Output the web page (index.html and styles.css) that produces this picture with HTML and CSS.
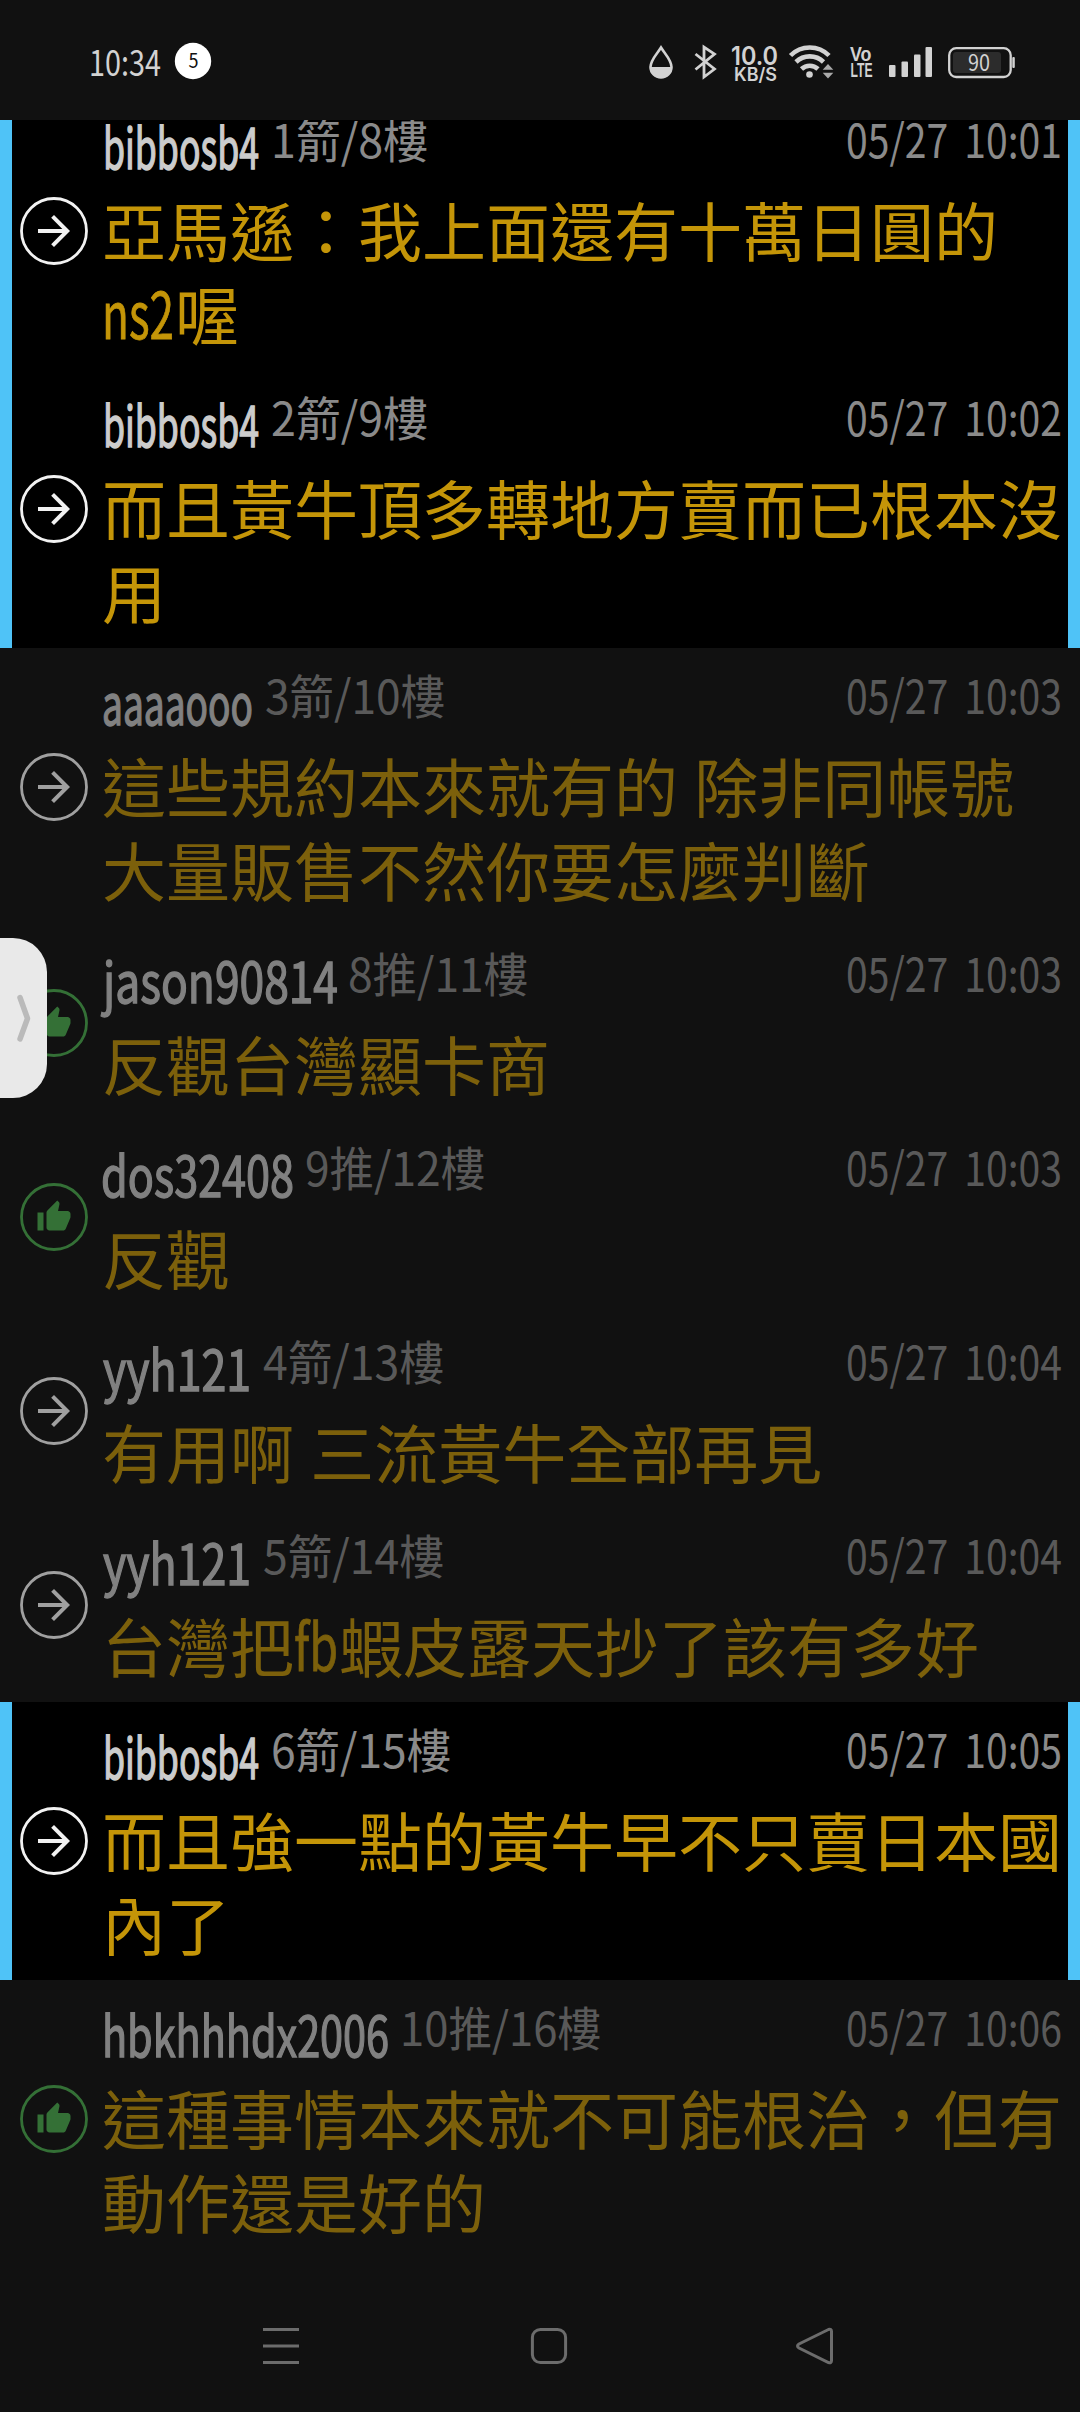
FILE: index.html
```html
<!DOCTYPE html>
<html lang="zh-Hant">
<head>
<meta charset="utf-8">
<title>推文</title>
<link rel="stylesheet" href="styles.css">
</head>
<body>
<svg class="defs" width="0" height="0">
  <symbol id="arrow" viewBox="0 0 68 68">
    <circle cx="34" cy="34" r="32.5" fill="none" stroke="currentColor" stroke-width="2.8"/>
    <path transform="translate(10 10) scale(2)" fill="currentColor" d="M12 4l-1.41 1.41L16.17 11H4v2h12.17l-5.58 5.59L12 20l8-8z"/>
  </symbol>
  <symbol id="thumb" viewBox="0 0 68 68">
    <circle cx="34" cy="34" r="32.5" fill="none" stroke="currentColor" stroke-width="2.8"/>
    <path transform="translate(16 16) scale(1.5)" fill="currentColor" d="M1 21h4V9H1v12zm22-11c0-1.1-.9-2-2-2h-6.31l.95-4.57.03-.32c0-.41-.17-.79-.44-1.06L14.17 1 7.59 7.59C7.22 7.95 7 8.45 7 9v10c0 1.1.9 2 2 2h9c.83 0 1.54-.5 1.84-1.22l3.02-7.05c.09-.23.14-.47.14-.73v-2z"/>
  </symbol>
</svg>
<div class="screen">
  <header class="status">
    <svg class="clock" width="126" height="60" viewBox="90 30 126 60">
      <text x="89" y="76" font-size="35" textLength="72" lengthAdjust="spacingAndGlyphs" fill="#d2d2d2">10:34</text>
      <circle cx="193" cy="61" r="18.2" fill="#fff"/>
      <text x="188.5" y="67.5" font-size="20" textLength="10" lengthAdjust="spacingAndGlyphs" fill="#111">5</text>
    </svg>
    <svg class="indicators" width="370" height="60" viewBox="646 30 370 60" fill="#d2d2d2">
      <path d="M661 47.5C657 54 650.5 60 650.5 67a10.5 10.5 0 0 0 21 0C671.500 60 665 54 661 47.5z" fill="none" stroke="#d2d2d2" stroke-width="2.6"/>
      <path d="M650 67h22a11 11 0 0 1-22 0z"/>
      <path d="M695.500 54l19 15-10.500 8V47l10.500 7-19 15.500" fill="none" stroke="#d2d2d2" stroke-width="2.8"/>
      <text class="bold" x="731" y="64.500" font-size="25.500" textLength="47" lengthAdjust="spacingAndGlyphs">10.0</text>
      <text class="bold" x="734" y="80.500" font-size="18.500" textLength="43" lengthAdjust="spacingAndGlyphs">KB/S</text>
      <g fill="none" stroke="#d2d2d2" stroke-width="4.600">
        <path d="M790.500 55.500a27 27 0 0 1 38.500 0"/>
        <path d="M796 62a19.500 19.500 0 0 1 27.500 0"/>
        <path d="M801.500 69a12 12 0 0 1 16.500 0"/>
      </g>
      <circle cx="809.500" cy="74.500" r="3.300"/>
      <path d="M828 64l5.300 5.800h-10.600zM828 78.500l5.300-5.800h-10.600z" fill="#aaa"/>
      <text class="bold narrow" x="850" y="61" font-size="19.500" textLength="21.500" lengthAdjust="spacingAndGlyphs">Vo</text>
      <text class="bold narrow" x="850.500" y="77" font-size="19.500" textLength="22" lengthAdjust="spacingAndGlyphs">LTE</text>
      <rect x="889" y="65" width="6.500" height="12" rx="1"/>
      <rect x="901.500" y="61.500" width="6.500" height="15.500" rx="1"/>
      <rect x="914" y="54.500" width="6.500" height="22.500" rx="1"/>
      <rect x="925.500" y="47" width="6.500" height="30" rx="1"/>
      <rect x="949.200" y="48.200" width="61.500" height="28.800" rx="7" fill="none" stroke="#d2d2d2" stroke-width="2.300"/>
      <rect x="953" y="52" width="48" height="21" rx="3" fill="#2c2c2c"/>
      <rect x="1012.300" y="57" width="2.500" height="11" rx="1"/>
      <text x="968" y="71" font-size="22.500" textLength="22" lengthAdjust="spacingAndGlyphs">90</text>
    </svg>
  </header>

  <main class="list">
    <article class="row own first">
      <svg class="icon"><use href="#arrow"/></svg>
      <div class="content">
        <div class="head">
          <svg class="name" width="158" height="60"><text x="1" y="44" textLength="156" lengthAdjust="spacingAndGlyphs">bibbosb4</text></svg>
          <svg class="floor" width="156" height="60"><text y="33" textLength="157" lengthAdjust="spacingAndGlyphs">1箭/8樓</text></svg>
          <svg class="time" width="216" height="60"><text y="33" textLength="216" lengthAdjust="spacingAndGlyphs">05/27 10:01</text></svg>
        </div>
        <p>亞馬遜：我上面還有十萬日圓的<br><svg class="latin" width="73" height="60"><text y="54" textLength="72" lengthAdjust="spacingAndGlyphs">ns2</text></svg>喔</p>
      </div>
    </article>
    <article class="row own">
      <svg class="icon"><use href="#arrow"/></svg>
      <div class="content">
        <div class="head">
          <svg class="name" width="158" height="60"><text x="1" y="44" textLength="156" lengthAdjust="spacingAndGlyphs">bibbosb4</text></svg>
          <svg class="floor" width="156" height="60"><text y="33" textLength="157" lengthAdjust="spacingAndGlyphs">2箭/9樓</text></svg>
          <svg class="time" width="216" height="60"><text y="33" textLength="216" lengthAdjust="spacingAndGlyphs">05/27 10:02</text></svg>
        </div>
        <p>而且黃牛頂多轉地方賣而已根本沒用</p>
      </div>
    </article>
    <article class="row">
      <svg class="icon"><use href="#arrow"/></svg>
      <div class="content">
        <div class="head">
          <svg class="name" width="152" height="60"><text x="0" y="44" textLength="151" lengthAdjust="spacingAndGlyphs">aaaaooo</text></svg>
          <svg class="floor" width="179" height="60"><text y="33" textLength="180" lengthAdjust="spacingAndGlyphs">3箭/10樓</text></svg>
          <svg class="time" width="216" height="60"><text y="33" textLength="216" lengthAdjust="spacingAndGlyphs">05/27 10:03</text></svg>
        </div>
        <p>這些規約本來就有的 除非同帳號<br>大量販售不然你要怎麼判斷</p>
      </div>
    </article>
    <article class="row">
      <svg class="icon up"><use href="#thumb"/></svg>
      <div class="content">
        <div class="head">
          <svg class="name" width="235" height="60"><text x="1" y="44" textLength="235" lengthAdjust="spacingAndGlyphs">jason90814</text></svg>
          <svg class="floor" width="179" height="60"><text y="33" textLength="180" lengthAdjust="spacingAndGlyphs">8推/11樓</text></svg>
          <svg class="time" width="216" height="60"><text y="33" textLength="216" lengthAdjust="spacingAndGlyphs">05/27 10:03</text></svg>
        </div>
        <p>反觀台灣顯卡商</p>
      </div>
    </article>
    <article class="row">
      <svg class="icon up"><use href="#thumb"/></svg>
      <div class="content">
        <div class="head">
          <svg class="name" width="192" height="60"><text x="-1" y="44" textLength="193" lengthAdjust="spacingAndGlyphs">dos32408</text></svg>
          <svg class="floor" width="179" height="60"><text y="33" textLength="180" lengthAdjust="spacingAndGlyphs">9推/12樓</text></svg>
          <svg class="time" width="216" height="60"><text y="33" textLength="216" lengthAdjust="spacingAndGlyphs">05/27 10:03</text></svg>
        </div>
        <p>反觀</p>
      </div>
    </article>
    <article class="row">
      <svg class="icon"><use href="#arrow"/></svg>
      <div class="content">
        <div class="head">
          <svg class="name" width="150" height="60"><text x="1" y="44" textLength="148" lengthAdjust="spacingAndGlyphs">yyh121</text></svg>
          <svg class="floor" width="180" height="60"><text y="33" textLength="181" lengthAdjust="spacingAndGlyphs">4箭/13樓</text></svg>
          <svg class="time" width="216" height="60"><text y="33" textLength="216" lengthAdjust="spacingAndGlyphs">05/27 10:04</text></svg>
        </div>
        <p>有用啊 三流黃牛全部再見</p>
      </div>
    </article>
    <article class="row">
      <svg class="icon"><use href="#arrow"/></svg>
      <div class="content">
        <div class="head">
          <svg class="name" width="150" height="60"><text x="1" y="44" textLength="148" lengthAdjust="spacingAndGlyphs">yyh121</text></svg>
          <svg class="floor" width="180" height="60"><text y="33" textLength="181" lengthAdjust="spacingAndGlyphs">5箭/14樓</text></svg>
          <svg class="time" width="216" height="60"><text y="33" textLength="216" lengthAdjust="spacingAndGlyphs">05/27 10:04</text></svg>
        </div>
        <p>台灣把<svg class="latin" width="45" height="60"><text y="54" textLength="44" lengthAdjust="spacingAndGlyphs">fb</text></svg>蝦皮露天抄了該有多好</p>
      </div>
    </article>
    <article class="row own">
      <svg class="icon"><use href="#arrow"/></svg>
      <div class="content">
        <div class="head">
          <svg class="name" width="158" height="60"><text x="1" y="44" textLength="156" lengthAdjust="spacingAndGlyphs">bibbosb4</text></svg>
          <svg class="floor" width="179" height="60"><text y="33" textLength="180" lengthAdjust="spacingAndGlyphs">6箭/15樓</text></svg>
          <svg class="time" width="216" height="60"><text y="33" textLength="216" lengthAdjust="spacingAndGlyphs">05/27 10:05</text></svg>
        </div>
        <p>而且強一點的黃牛早不只賣日本國內了</p>
      </div>
    </article>
    <article class="row">
      <svg class="icon up"><use href="#thumb"/></svg>
      <div class="content">
        <div class="head">
          <svg class="name" width="287" height="60"><text x="0" y="44" textLength="287" lengthAdjust="spacingAndGlyphs">hbkhhhdx2006</text></svg>
          <svg class="floor" width="201" height="60"><text y="33" textLength="201" lengthAdjust="spacingAndGlyphs">10推/16樓</text></svg>
          <svg class="time" width="216" height="60"><text y="33" textLength="216" lengthAdjust="spacingAndGlyphs">05/27 10:06</text></svg>
        </div>
        <p>這種事情本來就不可能根治，但有動作還是好的</p>
      </div>
    </article>
  </main>

  <nav class="nav">
    <svg width="40" height="40" viewBox="0 0 40 40"><path d="M2 3.500h36M2 20h36M2 36.500h36"/></svg>
    <svg width="40" height="40" viewBox="0 0 40 40"><rect x="3.400" y="3.400" width="33.200" height="33.200" rx="8"/></svg>
    <svg width="40" height="40" viewBox="0 0 40 40"><path d="M33.500 3.500L4 18q-3 2 0 4l29.500 14.500q3 1 3-2v-29q0-3-3-2z"/></svg>
  </nav>

  <aside class="handle">
    <svg width="47" height="160" viewBox="0 0 47 160"><path d="M20 59.500l7.500 21-7.500 20.500"/></svg>
  </aside>
</div>
</body>
</html>
```
FILE: styles.css
```css
* { box-sizing: border-box; }
body {
  margin: 0;
  background: #111;
  font-family: "Noto Sans CJK TC", sans-serif;
}
.defs { display: block; }
.screen {
  position: relative;
  width: 1080px;
  height: 2412px;
  background: #111;
  overflow: hidden;
  display: flex;
  flex-direction: column;
}
.status {
  flex: none;
  height: 120px;
  padding: 30px 64px 0 90px;
  display: flex;
  justify-content: space-between;
}
.bold { font-family: Inter, sans-serif; font-weight: 600; }
.bold.narrow { font-family: "Liberation Sans", sans-serif; font-weight: 700; }
.list { flex: none; height: 2138px; overflow: hidden; }
.row {
  display: flex;
  align-items: center;
  padding: 0 12px 0 20px;
}
.row > * { opacity: .6; }
.own {
  background: #000;
  border: solid #4fc3f7;
  border-width: 0 12px;
  padding: 0 0 0 8px;
}
.own > * { opacity: 1; }
.own .icon { color: #f2f2f2; }
.first { margin-top: -28px; }
.icon { flex: none; width: 68px; height: 68px; color: #fff; }
.icon.up { color: #4caf50; }
.content {
  flex: 1;
  margin-left: 14px;
  padding: 18px 0 16px;
}
.head {
  display: flex;
  height: 76px;
  padding-top: 15px;
}
.name, .floor, .time { flex: none; overflow: visible; }
.name {
  fill: #ccc;
  stroke: #ccc;
  stroke-width: 1.4px;
  font-size: 56px;
}
.floor, .time {
  fill: #8a8a8a;
  font-size: 47px;
}
.floor { margin-left: 11px; }
.time {
  margin-left: auto;
  margin-right: 6px;
  word-spacing: 9px;
}
p {
  margin: 0;
  font-size: 64px;
  line-height: 84px;
  color: #c49508;
  word-spacing: 2px;
}
.latin {
  overflow: visible;
  vertical-align: 5px;
  margin: -10px 0;
  fill: currentColor;
  stroke: currentColor;
  stroke-width: .8px;
}
.nav {
  height: 154px;
  padding: 68px 246px 0 261px;
  display: flex;
  justify-content: space-between;
}
.nav svg:nth-child(2) { position: relative; left: 1px; }
.nav svg:last-child { position: relative; left: 1px; }
.nav svg { fill: none; stroke: #6c6c6c; stroke-width: 3px; }
.handle {
  position: absolute;
  left: 0;
  top: 938px;
  width: 47px;
  height: 160px;
  border-radius: 0 34px 34px 0;
  background: #e9e9e9;
}
.handle svg {
  fill: none;
  stroke: #bababa;
  stroke-width: 5.5px;
  stroke-linecap: round;
  stroke-linejoin: round;
}
```
